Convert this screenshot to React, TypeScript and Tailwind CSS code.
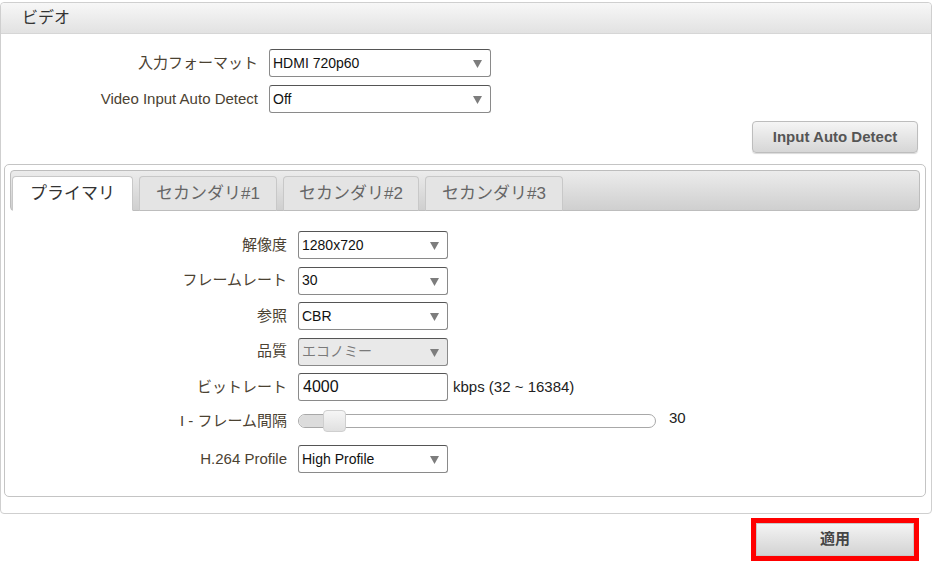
const font = { fontFamily: '"Liberation Sans", "Noto Sans CJK JP", Arial, sans-serif' };

function Select({ value, w, disabled }: { value: string; w: string; disabled?: boolean }) {
  return (
    <div
      className={`${w} h-[28px] flex items-center justify-between rounded-[3px] border border-[#8a8a8a] border-t-[#555] pl-[3px] pr-[8px] text-[14px] ${
        disabled ? "bg-[#e9e9e9] text-[#7a7a7a]" : "bg-white text-[#111]"
      }`}
    >
      <span>{value}</span>
      <svg width="9" height="8" viewBox="0 0 9 8" className="mt-[2px]">
        <path d="M0 0 H9 L4.5 8 Z" fill="#7d7d7d" />
      </svg>
    </div>
  );
}

function Row({ label, children }: { label: string; children: React.ReactNode }) {
  return (
    <div className="flex items-center h-[28px]">
      <div className="w-[288px] text-right text-[15px] text-[#4b4232] pr-[11px] whitespace-nowrap">{label}</div>
      {children}
    </div>
  );
}

const tabs = ["プライマリ", "セカンダリ#1", "セカンダリ#2", "セカンダリ#3"];
const tabW = ["w-[121px]", "w-[138px]", "w-[136px]", "w-[138px]"];

export default function App() {
  return (
    <div className="w-[934px] h-[578px] bg-white relative" style={font}>
      <div className="pt-[2px] pr-[2px]">
        <div className="w-[932px] h-[512px] rounded-[4px] border border-[#cfcfcf] flex flex-col">
          <div className="h-[31px] bg-gradient-to-b from-[#f7f7f7] to-[#e2e2e2] border-b border-[#d6d6d6] rounded-t-[4px] flex items-center pl-[21px] text-[16px] text-[#333]">
            ビデオ
          </div>
          <div className="flex flex-col gap-[8px] pt-[15px]">
            <div className="flex items-center h-[28px]">
              <div className="w-[268px] text-right text-[15px] text-[#4b4232] pr-[11px] whitespace-nowrap">入力フォーマット</div>
              <Select value="HDMI 720p60" w="w-[222px]" />
            </div>
            <div className="flex items-center h-[28px]">
              <div className="w-[268px] text-right text-[15px] text-[#4b4232] pr-[11px] whitespace-nowrap">Video Input Auto Detect</div>
              <Select value="Off" w="w-[222px]" />
            </div>
          </div>
          <div className="flex justify-end pr-[13px] pt-[8px]">
            <button className="w-[166px] h-[32px] rounded-[4px] border border-[#bdbdbd] bg-gradient-to-b from-[#f5f5f5] to-[#d6d6d6] text-[15px] font-bold text-[#555] shadow-[0_1px_1px_rgba(0,0,0,0.15)]">
              Input Auto Detect
            </button>
          </div>
          <div className="ml-[3px] mr-[5px] mt-[11px] h-[333px] rounded-[5px] border border-[#c4c4c4] p-[5px]">
            <div className="h-[41px] rounded-[4px] border border-[#bdbdbd] bg-gradient-to-b from-[#ececec] to-[#cfcfcf] flex items-end gap-[6px] pl-[1px]">
              {tabs.map((t, i) => (
                <div
                  key={t}
                  className={`${tabW[i]} h-[35px] -mb-px rounded-t-[4px] border border-[#c8c8c8] flex items-center justify-center text-[17px] ${
                    i === 0 ? "bg-white border-b-white text-[#333]" : "bg-[#e4e4e4] text-[#666] border-b-[#bdbdbd]"
                  }`}
                >
                  {t}
                </div>
              ))}
            </div>
            <div className="flex flex-col pt-[20px] gap-[7.5px]">
              <Row label="解像度">
                <Select value="1280x720" w="w-[150px]" />
              </Row>
              <Row label="フレームレート">
                <Select value="30" w="w-[150px]" />
              </Row>
              <Row label="参照">
                <Select value="CBR" w="w-[150px]" />
              </Row>
              <Row label="品質">
                <Select value="エコノミー" w="w-[150px]" disabled />
              </Row>
              <Row label="ビットレート">
                <div className="w-[150px] h-[28px] flex items-center rounded-[3px] border border-[#8a8a8a] border-t-[#555] pl-[4px] text-[16px] text-[#111] bg-white">
                  4000
                </div>
                <span className="ml-[5px] text-[15px] text-[#222]">kbps (32 ~ 16384)</span>
              </Row>
              <div className="flex items-center h-[29px] pb-[4px]">
                <div className="w-[288px] text-right text-[15px] text-[#4b4232] pr-[11px] whitespace-nowrap">I - フレーム間隔</div>
                <div className="relative w-[358px] h-[14px] rounded-full border border-[#a8a8a8] bg-white">
                  <div className="absolute left-0 top-0 h-full w-[30px] rounded-l-full bg-[#dcdcdc]" />
                  <div className="absolute left-[24px] top-[-5px] w-[23px] h-[22px] rounded-[4px] border border-[#cfcfcf] bg-gradient-to-b from-[#f6f6f6] to-[#e0e0e0]" />
                </div>
                <span className="ml-[13px] -mt-[5px] text-[15px] text-[#222]">30</span>
              </div>
              <Row label="H.264 Profile">
                <Select value="High Profile" w="w-[150px]" />
              </Row>
            </div>
          </div>
        </div>
      </div>
      <div className="flex justify-end pr-[15px] pt-[4px]">
        <div className="w-[168px] h-[43px] border-[5px] border-[#ff0000] bg-[#ff0000]">
          <button className="w-full h-full border border-[#c8c8c8] bg-gradient-to-b from-[#f4f4f4] to-[#d3d3d3] text-[15px] font-bold text-[#444]">
            適用
          </button>
        </div>
      </div>
    </div>
  );
}
